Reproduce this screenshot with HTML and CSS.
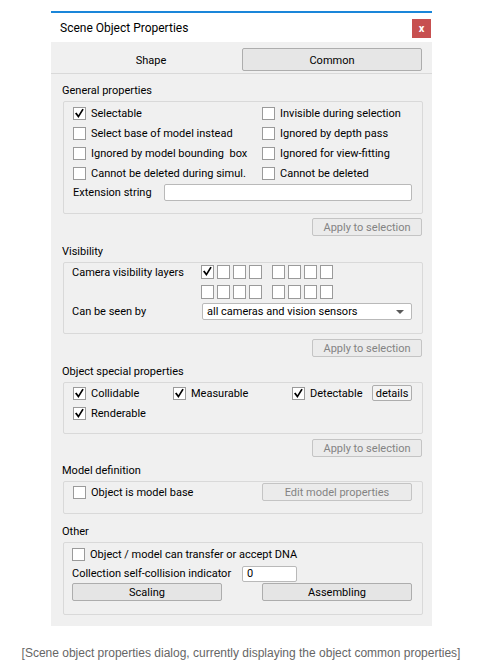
FILE: index.html
```html
<!DOCTYPE html>
<html>
<head>
<meta charset="utf-8">
<link rel="stylesheet" href="styles.css">
</head>
<body>
<div class="dialog">
  <div class="titlebar">
    <span class="title">Scene Object Properties</span>
    <span class="close">x</span>
  </div>
  <div class="body">
    <div class="tabs">
      <div class="tab">Shape</div>
      <div class="tab active">Common</div>
    </div>
    <div class="content">
      <div class="glabel first">General properties</div>
      <div class="group g-general">
        <div class="grid2">
          <label class="cb"><span class="box checked"><svg viewBox="0 0 13 13"><path d="M3.2 6.6 L5.4 9.6 L9.6 2.8"/></svg></span>Selectable</label>
          <label class="cb"><span class="box"></span>Invisible during selection</label>
          <label class="cb"><span class="box"></span>Select base of model instead</label>
          <label class="cb"><span class="box"></span>Ignored by depth pass</label>
          <label class="cb"><span class="box"></span>Ignored by model bounding&nbsp; box</label>
          <label class="cb"><span class="box"></span>Ignored for view-fitting</label>
          <label class="cb"><span class="box"></span>Cannot be deleted during simul.</label>
          <label class="cb"><span class="box"></span>Cannot be deleted</label>
        </div>
        <div class="row ext">
          <span class="lbl w-ext">Extension string</span>
          <span class="input ext-input"></span>
        </div>
      </div>
      <div class="applyrow a1"><span class="btn disabled apply">Apply to selection</span></div>

      <div class="glabel l-vis">Visibility</div>
      <div class="group g-vis">
        <div class="row vrow1">
          <span class="lbl w-vis">Camera visibility layers</span>
          <span class="layers">
            <span class="lgrp"><span class="box checked"><svg viewBox="0 0 13 13"><path d="M3.2 6.6 L5.4 9.6 L9.6 2.8"/></svg></span><span class="box"></span><span class="box"></span><span class="box"></span></span>
            <span class="lgrp"><span class="box"></span><span class="box"></span><span class="box"></span><span class="box"></span></span>
          </span>
        </div>
        <div class="row vrow2">
          <span class="lbl w-vis"></span>
          <span class="layers">
            <span class="lgrp"><span class="box"></span><span class="box"></span><span class="box"></span><span class="box"></span></span>
            <span class="lgrp"><span class="box"></span><span class="box"></span><span class="box"></span><span class="box"></span></span>
          </span>
        </div>
        <div class="row combo-row">
          <span class="lbl w-vis2">Can be seen by</span>
          <span class="combo">all cameras and vision sensors<span class="arrow"></span></span>
        </div>
      </div>
      <div class="applyrow a2"><span class="btn disabled apply">Apply to selection</span></div>

      <div class="glabel l-special">Object special properties</div>
      <div class="group g-special">
        <div class="row">
          <label class="cb c-coll"><span class="box checked"><svg viewBox="0 0 13 13"><path d="M3.2 6.6 L5.4 9.6 L9.6 2.8"/></svg></span>Collidable</label>
          <label class="cb c-meas"><span class="box checked"><svg viewBox="0 0 13 13"><path d="M3.2 6.6 L5.4 9.6 L9.6 2.8"/></svg></span>Measurable</label>
          <label class="cb c-det"><span class="box checked"><svg viewBox="0 0 13 13"><path d="M3.2 6.6 L5.4 9.6 L9.6 2.8"/></svg></span>Detectable</label>
          <span class="btn details">details</span>
        </div>
        <div class="row">
          <label class="cb"><span class="box checked"><svg viewBox="0 0 13 13"><path d="M3.2 6.6 L5.4 9.6 L9.6 2.8"/></svg></span>Renderable</label>
        </div>
      </div>
      <div class="applyrow a3"><span class="btn disabled apply">Apply to selection</span></div>

      <div class="glabel l-model">Model definition</div>
      <div class="group g-model">
        <div class="row">
          <label class="cb c-half"><span class="box"></span>Object is model base</label>
          <span class="btn disabled wide">Edit model properties</span>
        </div>
      </div>

      <div class="glabel l-other">Other</div>
      <div class="group g-other">
        <div class="row">
          <label class="cb"><span class="box"></span>Object / model can transfer or accept DNA</label>
        </div>
        <div class="row r19">
          <span class="lbl w-coll">Collection self-collision indicator</span>
          <span class="input num">0</span>
        </div>
        <div class="row r18 btnrow">
          <span class="btn wide">Scaling</span>
          <span class="btn wide">Assembling</span>
        </div>
      </div>
    </div>
  </div>
</div>
<p class="caption">[Scene object properties dialog, currently displaying the object common properties]</p>
</body>
</html>
```

FILE: styles.css
```css
html, body {
  margin: 0;
  padding: 0;
  background: #ffffff;
}
body {
  padding-top: 11px;
  font-family: Roboto, "Noto Sans", "Liberation Sans", sans-serif;
  font-size: 11px;
  color: #000;
}
.dialog {
  margin-left: 51px;
  width: 381px;
  border-top: 2px solid #1a86d9;
}
.titlebar {
  height: 29px;
  background: #ffffff;
  display: flex;
  align-items: center;
  justify-content: space-between;
  padding-left: 9px;
  padding-right: 1px;
}
.title {
  font-size: 12px;
  margin-top: 1px;
}
.close {
  width: 19px;
  height: 19px;
  background: #c75050;
  color: #fff;
  font-weight: bold;
  font-size: 11px;
  display: flex;
  align-items: center;
  justify-content: center;
  line-height: 1;
  margin-top: 2px;
}
.body {
  background: #f0f0f0;
  padding-bottom: 11px;
}
.tabs {
  display: flex;
  padding: 6px 10px 0 10px;
  height: 25px;
  border-bottom: 1px solid #d9d9d9;
  box-sizing: content-box;
}
.tab {
  width: 180px;
  height: 23px;
  padding-top: 1px;
  display: flex;
  align-items: center;
  justify-content: center;
  box-sizing: border-box;
}
.tab.active {
  border: 1px solid #adadad;
  border-radius: 2px;
  background: #e6e6e6;
  margin-left: 1px;
}
.content {
  padding: 0 9px 0 11px;
}
.glabel {
  height: 14px;
  line-height: 14px;
  margin-bottom: 3px;
}
.glabel.first { margin-top: 10px; }
.l-vis { margin-top: 9px; }
.l-special { margin-top: 8px; }
.l-model { margin-top: 7px; }
.l-other { margin-top: 11px; }

.group {
  border: 1px solid #d9d9d9;
  border-radius: 2px;
  margin-left: 1px;
  padding-left: 9px;
  padding-right: 10px;
  box-sizing: border-box;
}
.g-general { padding-top: 1px; height: 113px; }
.g-vis { padding-top: 0; padding-left: 8px; height: 72px; }
.g-special { padding-top: 0; height: 52px; }
.g-model { padding-top: 0; height: 33px; }
.g-other { padding-top: 1px; padding-left: 8px; height: 73px; }

.grid2 {
  display: grid;
  grid-template-columns: 189px 1fr;
  grid-auto-rows: 20px;
}
.row {
  height: 20px;
  display: flex;
  align-items: center;
}
.row.r19 { height: 19px; }
.row.r18 { height: 18px; }
.cb {
  display: flex;
  align-items: center;
  height: 20px;
  white-space: nowrap;
}
.box {
  width: 13px;
  height: 13px;
  box-sizing: border-box;
  border: 1px solid #9a9a9a;
  background: #ffffff;
  display: inline-block;
  flex: none;
  margin-right: 5px;
}
.box svg {
  width: 13px;
  height: 13px;
  margin: -1px 0 0 -1px;
  display: block;
}
.box svg path {
  fill: none;
  stroke: #000;
  stroke-width: 1.7;
  stroke-linecap: square;
}
.lbl { white-space: nowrap; }
.w-ext { width: 91px; }
.w-vis { width: 129px; }
.w-vis2 { width: 130px; }
.w-coll { width: 170px; }
.input {
  height: 17px;
  box-sizing: border-box;
  border: 1px solid #b9b9b9;
  border-radius: 2px;
  background: #fff;
  display: flex;
  align-items: center;
  padding-left: 4px;
}
.ext-input { width: 249px; }
.row.ext { height: 18px; }
.num { width: 55px; height: 16px; }
.vrow1 { height: 16px; margin-top: 1px; }
.vrow2 { height: 16px; margin-top: 4px; }
.layers {
  display: flex;
  gap: 10px;
}
.lgrp {
  display: flex;
  gap: 3px;
}
.lgrp .box { margin-right: 0; width: 13px; height: 14px; }
.combo-row { height: 17px; margin-top: 3px; }
.combo {
  width: 210px;
  height: 17px;
  box-sizing: border-box;
  border: 1px solid #b9b9b9;
  border-radius: 2px;
  background: #fff;
  display: flex;
  align-items: center;
  padding-left: 4px;
  position: relative;
}
.arrow {
  position: absolute;
  right: 7px;
  top: 6px;
  width: 0;
  height: 0;
  border-left: 4px solid transparent;
  border-right: 4px solid transparent;
  border-top: 4px solid #5a5a5a;
}
.btn {
  height: 18px;
  box-sizing: border-box;
  border: 1px solid #adadad;
  border-radius: 2px;
  background: #e5e5e5;
  display: inline-flex;
  align-items: center;
  justify-content: center;
  white-space: nowrap;
}
.btn.disabled {
  color: #838383;
  border-color: #c4c4c4;
  background: #ebebeb;
}
.applyrow {
  display: flex;
  justify-content: flex-end;
  padding-right: 1px;
}
.a1 { margin-top: 4px; }
.a2 { margin-top: 5px; }
.a3 { margin-top: 5px; }
.apply { width: 110px; }
.c-coll { width: 100px; }
.c-meas { width: 119px; }
.c-det { width: 80px; }
.details {
  width: 40px;
  height: 16px;
  background: #f4f4f4;
}
.c-half { width: 189px; }
.wide { width: 150px; }
.btnrow { gap: 40px; }
.caption {
  margin: 20px 0 0 0;
  text-align: center;
  font-family: "Liberation Sans", Arial, sans-serif;
  font-size: 12px;
  line-height: 14px;
  color: #666;
}
```
